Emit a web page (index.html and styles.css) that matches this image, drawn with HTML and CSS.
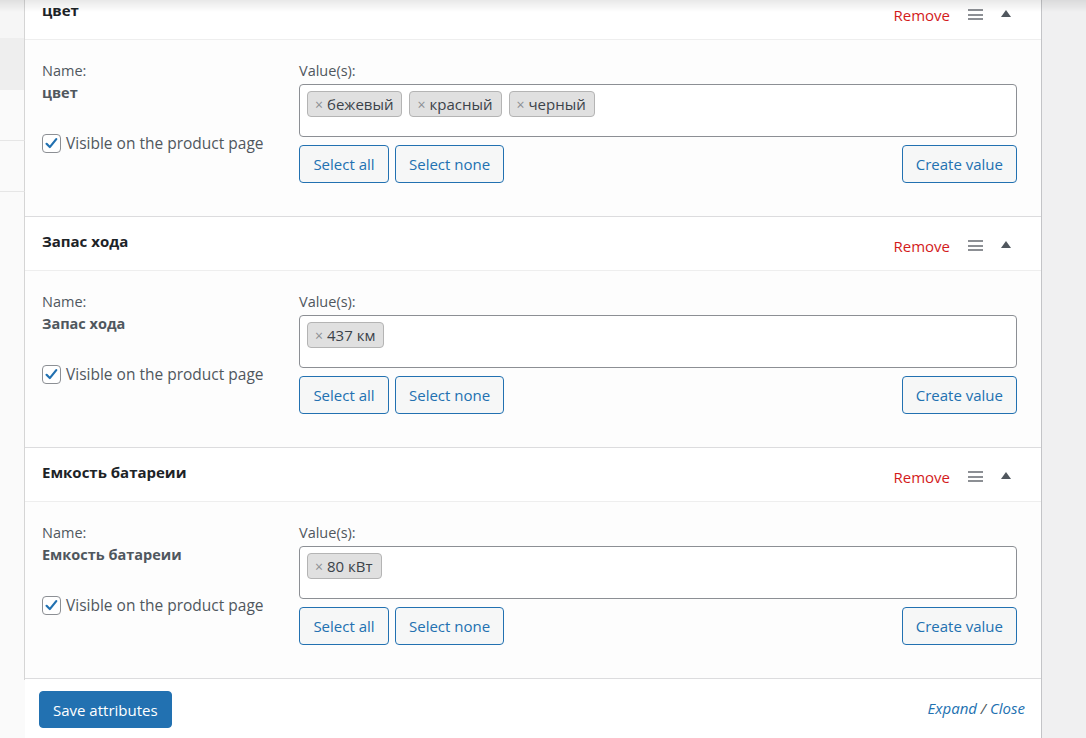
FILE: index.html
```html
<!DOCTYPE html>
<html lang="ru">
<head>
<meta charset="utf-8">
<title>Attributes</title>
<link rel="stylesheet" href="styles.css">
</head>
<body>
<div class="topshade"></div>
<div class="box">
  <ul class="tabs">
    <li class="tab t1"></li>
    <li class="tab t2 active"></li>
    <li class="tab t3"></li>
    <li class="tab t4"></li>
    <li class="tab rest"></li>
  </ul>
  <div class="panel">
    <div class="attrs">
      <div class="attr first">
        <div class="attr-head">
          <strong class="attr-title">цвет</strong>
          <div class="controls">
            <a class="remove">Remove</a>
            <span class="handle"><i></i><i></i><i></i></span>
            <span class="toggle"></span>
          </div>
        </div>
        <div class="attr-body">
          <div class="col-name">
            <div class="lbl">Name:</div>
            <div class="name">цвет</div>
            <label class="visible"><span class="cb"><svg viewBox="0 0 20 20" width="19" height="19"><path d="M4.2 10.4 L8 14.2 L15.6 4.8" fill="none" stroke="#2271b1" stroke-width="2.6" stroke-linecap="round" stroke-linejoin="round"/></svg></span>Visible on the product page</label>
          </div>
          <div class="col-values">
            <div class="lbl">Value(s):</div>
            <div class="select">
              <span class="chip"><span class="x">×</span>бежевый</span>
              <span class="chip"><span class="x">×</span>красный</span>
              <span class="chip"><span class="x">×</span>черный</span>
            </div>
            <div class="btnrow">
              <button class="btn">Select all</button>
              <button class="btn">Select none</button>
              <span class="spacer"></span>
              <button class="btn">Create value</button>
            </div>
          </div>
        </div>
      </div>

      <div class="attr">
        <div class="attr-head">
          <strong class="attr-title">Запас хода</strong>
          <div class="controls">
            <a class="remove">Remove</a>
            <span class="handle"><i></i><i></i><i></i></span>
            <span class="toggle"></span>
          </div>
        </div>
        <div class="attr-body">
          <div class="col-name">
            <div class="lbl">Name:</div>
            <div class="name">Запас хода</div>
            <label class="visible"><span class="cb"><svg viewBox="0 0 20 20" width="19" height="19"><path d="M4.2 10.4 L8 14.2 L15.6 4.8" fill="none" stroke="#2271b1" stroke-width="2.6" stroke-linecap="round" stroke-linejoin="round"/></svg></span>Visible on the product page</label>
          </div>
          <div class="col-values">
            <div class="lbl">Value(s):</div>
            <div class="select">
              <span class="chip"><span class="x">×</span>437 км</span>
            </div>
            <div class="btnrow">
              <button class="btn">Select all</button>
              <button class="btn">Select none</button>
              <span class="spacer"></span>
              <button class="btn">Create value</button>
            </div>
          </div>
        </div>
      </div>

      <div class="attr">
        <div class="attr-head">
          <strong class="attr-title">Емкость батареии</strong>
          <div class="controls">
            <a class="remove">Remove</a>
            <span class="handle"><i></i><i></i><i></i></span>
            <span class="toggle"></span>
          </div>
        </div>
        <div class="attr-body">
          <div class="col-name">
            <div class="lbl">Name:</div>
            <div class="name">Емкость батареии</div>
            <label class="visible"><span class="cb"><svg viewBox="0 0 20 20" width="19" height="19"><path d="M4.2 10.4 L8 14.2 L15.6 4.8" fill="none" stroke="#2271b1" stroke-width="2.6" stroke-linecap="round" stroke-linejoin="round"/></svg></span>Visible on the product page</label>
          </div>
          <div class="col-values">
            <div class="lbl">Value(s):</div>
            <div class="select">
              <span class="chip"><span class="x">×</span>80 кВт</span>
            </div>
            <div class="btnrow">
              <button class="btn">Select all</button>
              <button class="btn">Select none</button>
              <span class="spacer"></span>
              <button class="btn">Create value</button>
            </div>
          </div>
        </div>
      </div>
    </div>
    <div class="toolbar">
      <button class="btn-primary">Save attributes</button>
      <span class="expand"><a>Expand</a> / <a>Close</a></span>
    </div>
  </div>
</div>
</body>
</html>
```

FILE: styles.css
```css
* { box-sizing: border-box; }
html, body { margin: 0; padding: 0; }
body {
  background: #f0f0f1;
  font-family: "Open Sans", "Noto Sans", sans-serif;
  font-size: 14px;
  color: #3c434a;
  height: 738px;
  overflow: hidden;
}
.topshade {
  position: fixed;
  left: 0; top: 0; right: 0;
  height: 12px;
  background: linear-gradient(to bottom, rgba(0,0,0,0.09), rgba(0,0,0,0));
  pointer-events: none;
  z-index: 5;
}
.box {
  display: flex;
  width: 1042px;
  height: 738px;
}
.tabs {
  list-style: none;
  margin: 0;
  padding: 0;
  width: 25px;
  flex: none;
  display: flex;
  flex-direction: column;
  background: #fafafa;
}
.tab { border-right: 1px solid #d5d5d5; }
.tab.t1 { height: 38px; background: #f6f6f6; }
.tab.t2 { height: 52px; background: #eeeeee; }
.tab.t3 { height: 51px; border-bottom: 1px solid #e6e6e6; }
.tab.t4 { height: 51px; border-bottom: 1px solid #e6e6e6; }
.tab.rest { flex: none; height: 488px; }
.panel {
  flex: 1;
  display: flex;
  flex-direction: column;
  background: #fff;
  border-right: 1px solid #c3c4c7;
}
.attrs { margin-top: -14px; }
.attr { border-bottom: 1px solid #dcdcde; }
.attr-head {
  height: 54px;
  display: flex;
  align-items: center;
  justify-content: space-between;
  padding: 0 30px 0 17px;
  background: #fff;
  border-bottom: 1px solid #eeeeee;
}
.attr-title {
  font-weight: 700;
  font-size: 15px;
  color: #1d2327;
  margin-bottom: 6px;
}
.controls {
  display: flex;
  align-items: center;
  margin-top: 4px;
}
.remove {
  color: #d31b1b;
  font-size: 15px;
  margin-right: 18px;
}
.handle {
  display: flex;
  flex-direction: column;
  gap: 2.5px;
  width: 15px;
  margin-right: 18px;
}
.handle i {
  display: block;
  height: 2px;
  background: #8c8f94;
}
.toggle {
  width: 0; height: 0;
  border-left: 5.5px solid transparent;
  border-right: 5.5px solid transparent;
  border-bottom: 7px solid #50575e;
  margin-top: -2px;
}
.attr-body {
  display: flex;
  height: 176px;
  padding: 20px 24px 0 17px;
  background: #fdfdfd;
}
.col-name { width: 257px; flex: none; }
.col-values { flex: 1; }
.lbl {
  line-height: 22px;
  font-size: 14.5px;
  color: #50575e;
}
.name {
  line-height: 22px;
  font-weight: 700;
  font-size: 14.5px;
  color: #50575e;
}
.visible {
  display: flex;
  align-items: center;
  margin-top: 28px;
  font-size: 15.5px;
  color: #50575e;
  line-height: 22px;
}
.cb {
  width: 19px; height: 19px;
  border: 1px solid #8c8f94;
  border-radius: 4px;
  background: #fff;
  display: inline-flex;
  align-items: center;
  justify-content: center;
  margin-right: 5px;
}
.cb svg { display: block; }
.select {
  margin-top: 2px;
  height: 53px;
  border: 1px solid #8c8f94;
  border-radius: 4px;
  background: #fff;
  padding: 6px 7px;
  display: flex;
  align-items: flex-start;
  gap: 7px;
}
.chip {
  display: inline-flex;
  align-items: center;
  height: 26px;
  padding: 0 8px 0 7px;
  background: #e0e0e0;
  border: 1px solid #b4b4b4;
  border-radius: 4px;
  font-size: 15px;
  color: #3c434a;
}
.chip .x {
  color: #8c8f94;
  font-size: 14px;
  margin-right: 4px;
}
.btnrow {
  display: flex;
  margin-top: 8px;
  gap: 6px;
}
.spacer { flex: 1; }
.btn {
  height: 38px;
  padding: 0 13px;
  border: 1px solid #2271b1;
  border-radius: 4px;
  background: #f6f7f7;
  color: #2271b1;
  font-family: inherit;
  font-size: 15px;
}
.btn:first-child { padding: 0 13px 0 13px; width: 90px; }
.toolbar {
  display: flex;
  align-items: center;
  justify-content: space-between;
  padding: 12px 16px 0 14px;
}
.btn-primary {
  height: 37px;
  padding: 0 13px;
  border: 1px solid #2271b1;
  border-radius: 4px;
  background: #2271b1;
  color: #fff;
  font-family: inherit;
  font-size: 15px;
}
.expand {
  font-style: italic;
  color: #50575e;
  font-size: 15px;
  margin-bottom: 3px;
}
.expand a { color: #2271b1; }
```
